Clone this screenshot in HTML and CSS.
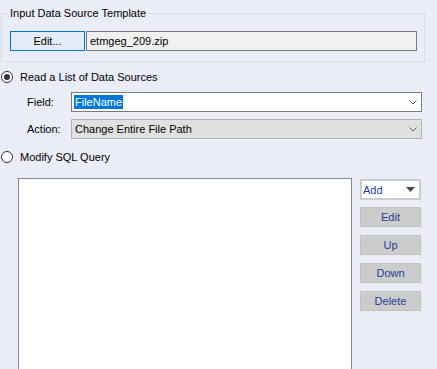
FILE: index.html
```html
<!DOCTYPE html>
<html lang="en">
<head>
    <meta charset="UTF-8">
    <title>Data Source Options</title>
    <link rel="stylesheet" href="styles.css">
</head>
<body>
    <fieldset class="group">
        <legend>Input Data Source Template</legend>
        <div class="template-row">
            <button class="btn-focus">Edit...</button>
            <div class="readonly-field">etmgeg_209.zip</div>
        </div>
    </fieldset>

    <div class="radio-row">
        <span class="radio checked"></span>
        <span>Read a List of Data Sources</span>
    </div>

    <div class="combo-grid">
        <label>Field:</label>
        <div class="combo">
            <span class="selected-text">FileName</span>
            <svg class="chevron" width="8" height="5" viewBox="0 0 8 5"><polyline points="0.5,0.5 4,4 7.5,0.5" fill="none" stroke="#606060" stroke-width="1"/></svg>
        </div>
        <label>Action:</label>
        <div class="combo disabled">
            <span>Change Entire File Path</span>
            <svg class="chevron" width="8" height="5" viewBox="0 0 8 5"><polyline points="0.5,0.5 4,4 7.5,0.5" fill="none" stroke="#606060" stroke-width="1"/></svg>
        </div>
    </div>

    <div class="radio-row second">
        <span class="radio"></span>
        <span>Modify SQL Query</span>
    </div>

    <div class="query-area">
        <div class="listbox"></div>
        <div class="side-buttons">
            <div class="add-btn">
                <span>Add</span>
                <svg width="9" height="5" viewBox="0 0 9 5"><polygon points="0,0 9,0 4.5,5" fill="#4a4a4a"/></svg>
            </div>
            <button class="flat-btn">Edit</button>
            <button class="flat-btn">Up</button>
            <button class="flat-btn">Down</button>
            <button class="flat-btn">Delete</button>
        </div>
    </div>
</body>
</html>
```

FILE: styles.css
```css
body {
    margin: 0;
    background-color: #eaedf8;
    font-family: 'Liberation Sans', Arial, sans-serif;
    font-size: 11px;
    color: #000;
    overflow: hidden;
}

.group {
    box-sizing: border-box;
    width: 424px;
    margin: 6px 0 0 1px;
    padding: 10px 7px 10px 6px;
    border: 1px solid #d9dbe0;
    min-width: 0;
}

.group legend {
    padding: 0 2px;
    line-height: 15px;
}

.template-row {
    display: flex;
    gap: 1px;
    margin-left: 2px;
}

.btn-focus {
    box-sizing: border-box;
    width: 75px;
    height: 20px;
    border: 1px solid #0078d7;
    background-color: #e3ebf7;
    font-family: inherit;
    font-size: 11px;
    color: #000;
    padding: 0;
}

.readonly-field {
    box-sizing: border-box;
    width: 331px;
    height: 20px;
    border: 1px solid #7a7a7a;
    background-color: #f0f0f0;
    padding-left: 3px;
    line-height: 18px;
}

.radio-row {
    display: flex;
    align-items: center;
    gap: 7px;
    height: 16px;
    margin: 7px 0 0 1px;
}

.radio-row.second {
    margin-top: 10px;
}

.radio {
    box-sizing: border-box;
    width: 12px;
    height: 12px;
    border: 1px solid #333;
    border-radius: 50%;
    background-color: #fff;
    display: flex;
    justify-content: center;
    align-items: center;
}

.radio.checked::after {
    content: '';
    width: 6px;
    height: 6px;
    border-radius: 50%;
    background-color: #333;
}

.combo-grid {
    display: grid;
    grid-template-columns: 44px 351px;
    row-gap: 7px;
    margin: 7px 0 0 27px;
    align-items: center;
}

.combo {
    box-sizing: border-box;
    height: 20px;
    border: 1px solid #7a7a7a;
    background-color: #fff;
    display: flex;
    align-items: center;
    justify-content: space-between;
    padding: 0 4px 0 2px;
}

.combo.disabled {
    background-color: #e0e0e0;
    border-color: #b3b3b3;
}

.combo.disabled span {
    padding-left: 1px;
}

.selected-text {
    background-color: #0078d7;
    color: #fff;
    padding: 0 1px;
    line-height: 14px;
}

.query-area {
    display: flex;
    align-items: flex-start;
    gap: 8px;
    margin: 13px 0 0 18px;
}

.listbox {
    box-sizing: border-box;
    width: 334px;
    height: 191px;
    border: 1px solid #828790;
    border-bottom: none;
    background-color: #fff;
}

.side-buttons {
    display: flex;
    flex-direction: column;
    gap: 8px;
    margin-top: 1px;
}

.add-btn {
    box-sizing: border-box;
    width: 61px;
    height: 21px;
    border: 2px solid #cccccc;
    background-color: #fff;
    color: #1c3f9a;
    display: flex;
    align-items: center;
    justify-content: space-between;
    padding: 0 4px 0 1px;
    margin-bottom: -1px;
}

.flat-btn {
    box-sizing: border-box;
    width: 61px;
    height: 20px;
    border: 1px solid #c2c2c2;
    background-color: #cccccc;
    color: #1c3f9a;
    font-family: inherit;
    font-size: 11px;
    padding: 0;
}
```
